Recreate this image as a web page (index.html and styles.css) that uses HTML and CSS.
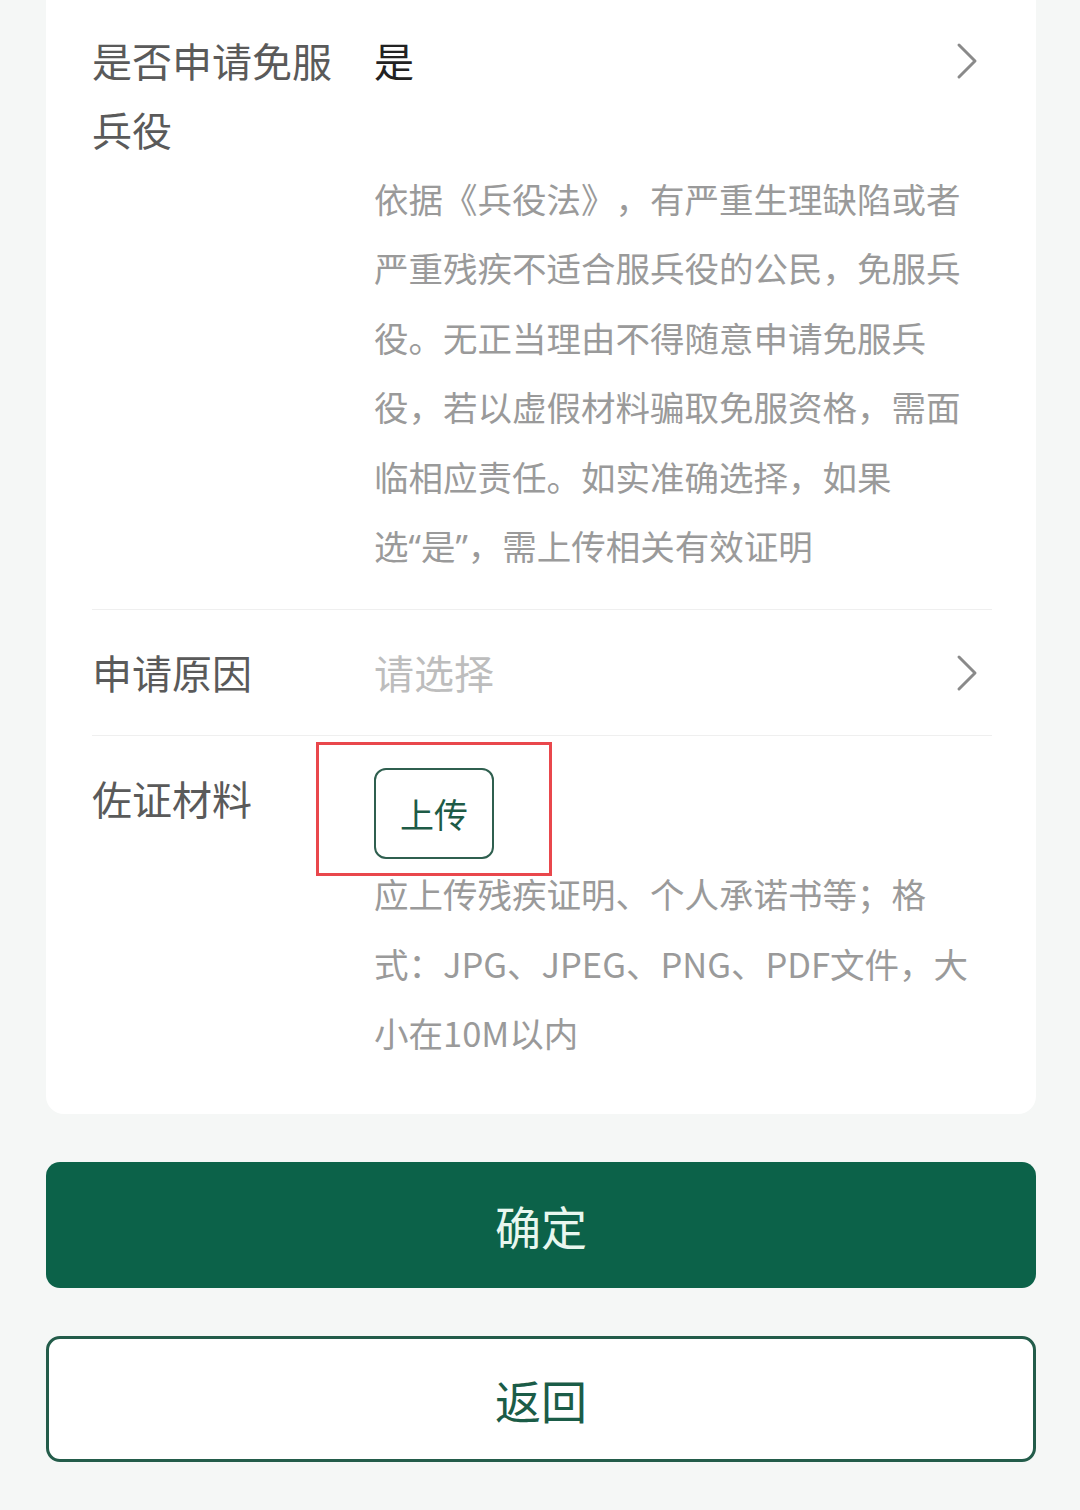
FILE: index.html
```html
<!DOCTYPE html>
<html>
<head>
  <meta charset="utf-8">
  <title>免服兵役申请</title>
  <link rel="stylesheet" href="styles.css">
</head>
<body>

  <!-- Form card -->
  <div class="form-card">
    <div class="field">
      <div class="field-main">
        <div class="field-label">是否申请免服兵役</div>
        <div class="field-value">是</div>
        <svg class="chevron" width="22" height="38" viewBox="0 0 22 38">
          <polyline points="3,3 19,19 3,35" />
        </svg>
      </div>
      <p class="field-tip">依据《兵役法》，有严重生理缺陷或者严重残疾不适合服兵役的公民，免服兵役。无正当理由不得随意申请免服兵役，若以虚假材料骗取免服资格，需面临相应责任。如实准确选择，如果<span class="quoted">选“是”</span>，需上传相关有效证明</p>
    </div>

    <div class="field">
      <div class="field-main">
        <div class="field-label">申请原因</div>
        <div class="field-value placeholder">请选择</div>
        <svg class="chevron" width="22" height="38" viewBox="0 0 22 38">
          <polyline points="3,3 19,19 3,35" />
        </svg>
      </div>
    </div>

    <div class="field last">
      <div class="field-main">
        <div class="field-label">佐证材料</div>
        <div class="field-value">
          <div class="upload-wrap">
            <button class="upload-btn">上传</button>
            <span class="mark-box"></span>
          </div>
        </div>
      </div>
      <p class="field-tip">应上传残疾证明、个人承诺书等；格式：JPG、JPEG、PNG、PDF文件，大小在10M以内</p>
    </div>
  </div>

  <!-- Actions -->
  <div class="actions">
    <button class="btn btn-primary">确定</button>
    <button class="btn btn-outline">返回</button>
  </div>

</body>
</html>
```

FILE: styles.css
```css
body {
  margin: 0;
  background-color: #f5f7f6;
  font-family: "Noto Sans CJK SC", "Noto Sans", sans-serif;
  color: #555;
  text-spacing-trim: space-all;
}

/* narrow latin quotes, kept on one line */
.quoted {
  white-space: nowrap;
  font-family: "Noto Sans", "Noto Sans CJK SC", sans-serif;
}

/* Form card */
.form-card {
  margin: 0 44px 0 46px;
  padding: 0 44px 46px 46px;
  background: #fff;
  border-radius: 0 0 18px 18px;
}

.field {
  padding: 28px 0;
  border-bottom: 1.5px solid #efefef;
}

.field:first-child {
  padding-top: 26px;
}

.field.last {
  border-bottom: none;
  padding-bottom: 0;
}

.field-main {
  display: flex;
  align-items: flex-start;
}

.field-label {
  width: 250px;
  margin-right: 32px;
  font-size: 40px;
  line-height: 69px;
  color: #5a5a5a;
}

.field-value {
  flex: 1;
  font-size: 40px;
  line-height: 69px;
  color: #222;
}

.field-value.placeholder {
  color: #bdbdbd;
}

.chevron {
  margin: 16px 14px 0 0;
  fill: none;
  stroke: #8a8a8a;
  stroke-width: 3;
  stroke-linecap: round;
  stroke-linejoin: round;
}

.field-tip {
  margin: 0;
  padding-left: 282px;
  font-size: 34.5px;
  line-height: 69.4px;
  color: #9a9a9a;
}

/* Upload */
.upload-wrap {
  position: relative;
  padding-top: 4px;
}

.upload-btn {
  display: block;
  width: 120px;
  height: 91px;
  padding: 0;
  background: #fff;
  border: 2px solid #2f5f4f;
  border-radius: 12px;
  font-family: inherit;
  font-size: 34px;
  color: #1e5b46;
}

.mark-box {
  position: absolute;
  left: -58px;
  top: -22px;
  width: 230px;
  height: 128px;
  border: 3px solid #e9474c;
  z-index: 2;
}

/* Actions */
.actions {
  display: flex;
  flex-direction: column;
  gap: 48px;
  margin: 48px 44px 0 46px;
}

.btn {
  height: 126px;
  border-radius: 14px;
  font-family: inherit;
  font-size: 46px;
  line-height: 1;
}

.btn-primary {
  background: #0c6249;
  border: none;
  color: #e8f7ef;
}

.btn-outline {
  background: #fff;
  border: 3px solid #235c4a;
  color: #1b5c47;
}
```
